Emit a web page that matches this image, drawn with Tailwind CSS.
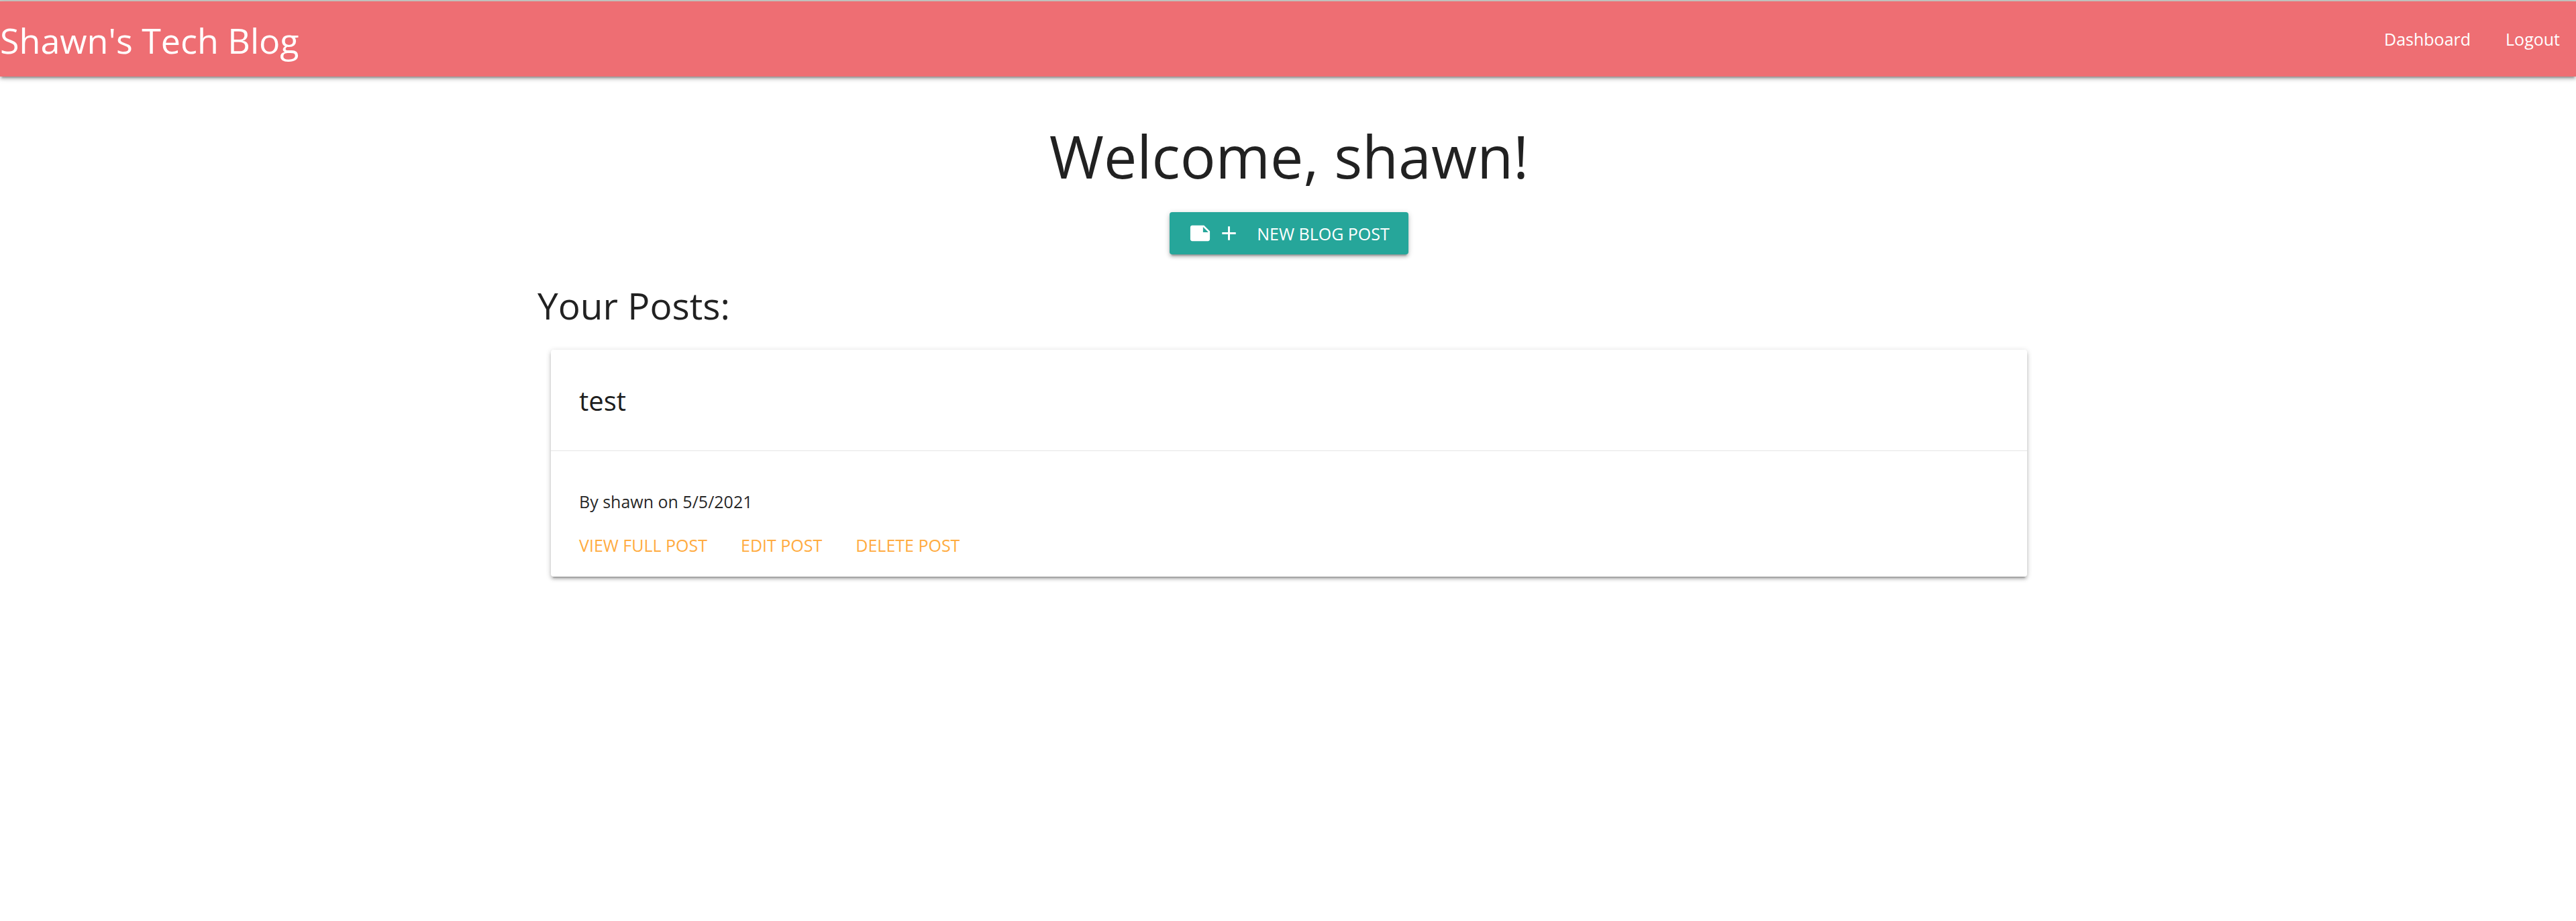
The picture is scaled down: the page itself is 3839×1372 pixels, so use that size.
<!DOCTYPE html>
<html lang="en">
<head>
<meta charset="utf-8">
<meta name="viewport" content="width=device-width, initial-scale=1">
<title>Shawn's Tech Blog</title>
<script src="https://cdn.jsdelivr.net/npm/@tailwindcss/browser@4"></script>
</head>
<body class="min-h-screen bg-white font-['Segoe_UI','Open_Sans',sans-serif] text-[25px] leading-10 text-black/87">
  <header class="border-t-2 border-[#cacac6]">
    <nav class="flex h-28 items-center justify-between bg-[#ee6e73] text-white shadow-[0_4px_4px_0_rgba(0,0,0,0.14),0_5px_2px_-3px_rgba(0,0,0,0.2),0_2px_9px_0_rgba(0,0,0,0.2)]">
      <a href="#" class="pt-1 text-[52px] leading-[64px]">Shawn's Tech Blog</a>
      <ul class="flex gap-1">
        <li><a href="#" class="px-6">Dashboard</a></li>
        <li><a href="#" class="px-6">Logout</a></li>
      </ul>
    </nav>
  </header>

  <main class="pl-[3px]">
    <div class="mx-auto max-w-[2240px]">
      <div class="flex flex-col items-center gap-8 pt-[66px]">
        <h1 class="text-[88px] leading-[104px]">Welcome, shawn!</h1>
        <button type="button" class="flex h-[63px] items-center rounded-[4px] bg-[#26a69a] px-7 text-white uppercase shadow-[0_4px_4px_0_rgba(0,0,0,0.14),0_5px_2px_-3px_rgba(0,0,0,0.2),0_2px_9px_0_rgba(0,0,0,0.2)]">
          <svg class="mr-2 size-[35px]" viewBox="0 0 24 24" fill="currentColor" aria-hidden="true"><path d="M22 10l-6-6H4c-1.1 0-2 .9-2 2v12.01c0 1.1.9 1.99 2 1.99l16-.01c1.1 0 2-.89 2-1.99V10zm-7-4.5l5.5 5.5H15V5.5z"/></svg>
          <svg class="mr-6 size-[35px]" viewBox="0 0 24 24" fill="currentColor" aria-hidden="true"><path d="M19 13h-6v6h-2v-6H5v-2h6V5h2v6h6v2z"/></svg>
          New Blog Post
        </button>
      </div>

      <section class="pt-11">
        <h2 class="text-[55px] leading-[64px]">Your Posts:</h2>
        <article class="mx-5 mt-[34px] rounded-[4px] bg-white shadow-[0_4px_4px_0_rgba(0,0,0,0.14),0_5px_2px_-3px_rgba(0,0,0,0.2),0_2px_9px_0_rgba(0,0,0,0.2)]">
          <h3 class="px-[42px] pt-[42px] pb-10 text-[40px] leading-[68px] text-black/90">test</h3>
          <div class="border-t border-black/10 px-[42px] pt-[55px] pb-[27px]">
            <p>By shawn on 5/5/2021</p>
            <div class="mt-[25px] flex gap-[50px] text-[#ffab40] uppercase">
              <a href="#">View full post</a>
              <a href="#">Edit post</a>
              <a href="#">Delete post</a>
            </div>
          </div>
        </article>
      </section>
    </div>
  </main>
</body>
</html>
